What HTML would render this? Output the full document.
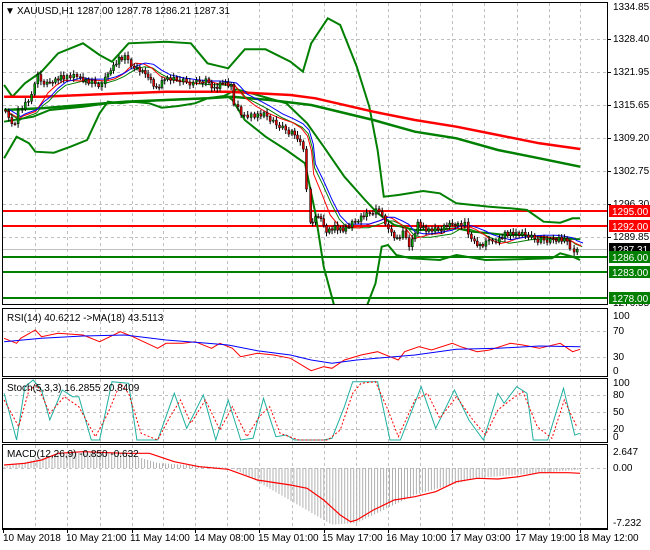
<!DOCTYPE html>
<html><head><meta charset="utf-8"><style>
html,body{margin:0;padding:0;background:#fff;width:650px;height:550px;overflow:hidden}
svg{display:block;font-family:"Liberation Sans",sans-serif}
</style></head><body>
<svg id="s" width="650" height="550" xmlns="http://www.w3.org/2000/svg">
<rect width="650" height="550" fill="#fff"/>
<g id="grid" stroke="#c0c0c0" stroke-dasharray="3,3" stroke-width="1"></g>
<g id="lines" fill="none"></g>
<g id="frames" fill="none" stroke="#000" stroke-width="1">
<rect x="2.5" y="2.5" width="605" height="302"/>
<rect x="2.5" y="308.5" width="605" height="68"/>
<rect x="2.5" y="378.5" width="605" height="64"/>
<rect x="2.5" y="444.5" width="605" height="84"/>
<line x1="2" y1="529.5" x2="608" y2="529.5"/>
</g>
<g font-size="10" fill="#000">
<text x="5" y="14">▼</text><text x="17" y="14">XAUUSD,H1  1287.00 1287.78 1286.21 1287.31</text>
<text x="7" y="321">RSI(14) 40.6212  -&gt;MA(18) 43.5113</text>
<text x="7" y="391">Stoch(5,3,3) 16.2855 20.8409</text>
<text x="7" y="457">MACD(12,26,9) -0.850 -0.632</text>
</g>
<g id="axis" font-size="10" fill="#000"></g>
</svg>
<script>
var S="http://www.w3.org/2000/svg";
function el(p,t,a){var e=document.createElementNS(S,t);for(var k in a)e.setAttribute(k,a[k]);p.appendChild(e);return e;}
var G=document.getElementById('grid'),L=document.getElementById('lines'),A=document.getElementById('axis');
var vx=[35,67,100,132,163,195,227,259,292,324,356,388,420,452,484,517,549,580];
[[3,304],[309,376],[379,442],[445,528]].forEach(function(r){vx.forEach(function(x){el(G,'line',{x1:x+.5,y1:r[0],x2:x+.5,y2:r[1]});});});
[39,72,105,138,171,204,237].forEach(function(y){el(G,'line',{x1:3,y1:y+.5,x2:607,y2:y+.5});});
[331,357,395,412,429,468].forEach(function(y){el(G,'line',{x1:3,y1:y+.5,x2:607,y2:y+.5});});
el(G,'line',{x1:3,y1:249.5,x2:607,y2:249.5,stroke:'#c0c0c0','stroke-dasharray':'none'});
function pts(a,oy){var s='';for(var i=0;i<a.length;i+=2)s+=(a[i]/2.41).toFixed(1)+','+(a[i+1]/3+oy).toFixed(1)+' ';return s;}
function pl(a,oy,c,w,da){var o={points:pts(a,oy),stroke:c,'stroke-width':w};if(da)o['stroke-dasharray']=da;el(L,'polyline',o);}
// horizontal levels
[[211,'#f00'],[226,'#f00'],[257,'#007f00'],[272,'#007f00'],[298,'#007f00']].forEach(function(h){el(L,'line',{x1:3,y1:h[0],x2:608,y2:h[0],stroke:h[1],'stroke-width':2});});
// BB & MAs
pl([10,255,30,290,60,250,100,215,140,160,200,130,240,165,270,185,310,130,400,125,460,130,500,190,550,205,590,148,640,148,700,185,730,215,750,130,790,55,820,75,860,200,890,320,910,450,925,590,960,585,1020,573,1060,580,1100,610,1140,615,1180,620,1230,625,1270,630,1310,665,1350,668,1380,655,1398,655],0,'#007f00',2);
pl([10,475,40,410,70,430,85,455,130,458,170,440,210,420,240,340,260,305,290,310,320,305,360,310,390,323,430,318,470,310,500,295,550,290,560,300,590,360,640,410,690,450,735,490,760,640,780,800,805,915],0,'#007f00',2);
pl([885,915,905,850,920,740,935,735,955,765,990,775,1060,780,1100,765,1170,780,1250,778,1330,775,1350,760,1380,770,1398,780],0,'#007f00',2);
pl([10,365,80,350,120,330,200,320,260,310,320,305,400,300,500,295,540,288,570,268,620,285,690,310,740,370,780,440,830,530,880,600,910,640,950,675,1000,690,1050,690,1100,685,1140,695,1180,700,1220,705,1260,705,1300,710,1350,715,1398,718],0,'#007f00',2);
pl([10,290,100,290,200,285,300,280,400,275,550,275,700,285,760,295,900,335,1000,360,1100,380,1200,405,1300,430,1398,447],0,'#f00',2.5);
pl([10,330,100,325,200,315,300,305,400,300,500,295,560,290,650,300,750,315,900,360,1000,395,1100,415,1200,450,1300,475,1398,500],0,'#007f00',2.5);
var C=[10,330,40,375,50,330,80,290,95,220,110,260,130,240,150,230,190,230,210,245,250,255,270,205,290,175,305,170,320,195,340,215,360,225,380,265,400,235,430,240,470,250,500,240,520,265,540,245,560,260,570,310,585,345,610,345,640,345,670,375,700,395,720,410,735,440,745,560,750,670,770,650,790,690,810,680,830,690,860,665,880,650,910,630,925,640,940,690,960,720,975,700,990,740,1010,670,1030,690,1060,690,1080,680,1100,670,1125,670,1140,720,1160,740,1175,730,1200,720,1220,700,1240,700,1270,705,1300,720,1330,720,1350,715,1370,720,1380,750,1395,755];
// smoothed MAs
function sm(a,n,dx,dy){var r=[];for(var i=0;i<a.length;i+=2){var s=0,c=0;for(var j=Math.max(0,i-2*n);j<=i;j+=2){s+=a[j+1];c++;}r.push(a[i]+dx,s/c+dy);}return r;}
pl(sm(C,4,8,8),0,'#007f00',1);pl(sm(C,3,6,3),0,'#f00',1);pl(sm(C,4,10,-3),0,'#00f',1);
// candles
var cg=el(L,'g',{});var prev=C[1]/3;
for(var i=0;i<C.length-2;i+=2){var x0=C[i]/2.41,y0=C[i+1]/3,x1=C[i+2]/2.41,y1=C[i+3]/3;var n=Math.max(1,Math.round((x1-x0)/3.2));
for(var k=0;k<n;k++){var x=x0+(x1-x0)*k/n,o=prev,c=y0+(y1-y0)*(k+1)/n+((k*7+i)%5-2)*1.2;var t=Math.min(o,c),b=Math.max(o,c);
el(cg,'line',{x1:x+1.5,y1:t-2-((i+k)%3),x2:x+1.5,y2:b+2+((i+k*2)%3),stroke:'#000','stroke-width':1});
el(cg,'rect',{x:x+.5,y:t,width:2,height:Math.max(1,b-t),fill:c<o?'#00a000':'#e00000',stroke:'#000','stroke-width':.5});prev=c;}}
// RSI
pl([10,115,40,130,50,115,85,90,100,110,140,100,200,105,240,125,290,95,320,110,380,145,400,130,440,130,470,125,510,145,530,130,560,145,580,170,620,160,660,165,700,175,740,205,750,212,780,200,800,205,830,180,870,165,910,155,940,170,960,180,975,155,1010,140,1040,150,1090,130,1110,140,1150,155,1180,150,1230,130,1260,135,1300,145,1350,130,1380,155,1398,148],300,'#f00',1);
pl([10,125,100,115,200,108,300,105,400,120,500,130,550,135,620,152,700,165,750,180,800,190,860,180,950,170,1000,165,1100,148,1200,145,1300,138,1398,140],300,'#00f',1);
// Stoch
pl([10,280,40,420,60,260,80,240,100,270,120,360,150,270,175,290,190,290,220,420,240,420,270,245,310,250,330,420,380,420,420,280,450,385,490,285,520,420,550,300,580,420,610,415,635,295,665,410,690,405,710,420,780,420,800,415,830,320,850,245,910,245,940,420,965,420,1015,260,1050,385,1095,270,1130,360,1165,420,1200,280,1215,310,1245,260,1270,280,1285,420,1320,420,1358,265,1385,405,1398,400],300,'#20b0a0',1);
pl([10,300,45,380,70,270,90,255,120,340,155,290,190,320,230,410,260,340,290,250,310,280,340,400,380,420,410,350,435,300,460,370,495,300,530,390,560,320,595,410,625,350,650,320,675,400,720,420,790,420,820,390,850,280,870,250,905,245,935,330,960,410,1000,300,1030,280,1060,355,1100,290,1140,360,1170,405,1200,330,1230,300,1260,275,1295,380,1330,415,1360,300,1390,380],300,'#f00',1,'2,2');
// MACD hist
function hv(x){var P=[0,0,150,-45,300,-45,380,-15,560,0,620,40,800,170,860,165,1000,80,1150,30,1300,15,1398,5];for(var i=0;i<P.length-2;i+=2){if(x<=P[i+2]){var t=(x-P[i])/(P[i+2]-P[i]);return P[i+1]+(P[i+3]-P[i+1])*t;}}return 0;}
for(var x=10;x<=1398;x+=7.2){var h=hv(x)/3;el(L,'line',{x1:(x/2.41).toFixed(1),y1:468,x2:(x/2.41).toFixed(1),y2:468+h,stroke:'#b0b0b0','stroke-width':1});}
pl([10,495,60,490,100,480,140,460,200,455,300,460,360,460,420,485,480,500,550,508,620,540,700,555,740,565,780,600,820,645,845,665,860,660,900,630,950,600,1000,590,1050,575,1100,545,1150,535,1200,537,1250,530,1300,518,1370,518,1398,520],300,'#f00',1.2);
// axis labels
[[10,'1334.85'],[42,'1328.40'],[75,'1321.95'],[108,'1315.65'],[141,'1309.20'],[174,'1302.75'],[207,'1296.30'],[240,'1289.85'],[306,'1276.55'],[319,'100'],[334,'70'],[360,'30'],[374,'0'],[386,'100'],[398,'80'],[415,'50'],[432,'20'],[440,'0'],[455,'2.647'],[471,'0.00'],[526,'-7.232']].forEach(function(a){el(A,'text',{x:613,y:a[0]}).textContent=a[1];});
[[211,'#f00','1295.00','#fff'],[226,'#f00','1292.00','#fff'],[249,'#000','1287.31','#fff'],[257,'#007f00','1286.00','#fff'],[272,'#007f00','1283.00','#fff'],[298,'#007f00','1278.00','#fff']].forEach(function(b){el(A,'rect',{x:609,y:b[0]-6,width:41,height:12,fill:b[1]});el(A,'text',{x:612,y:b[0]+4,fill:b[3]}).textContent=b[2];});
[[66,'10 May 21:00'],[130,'11 May 14:00'],[194,'14 May 08:00'],[258,'15 May 01:00'],[322,'15 May 17:00'],[386,'16 May 10:00'],[450,'17 May 03:00'],[515,'17 May 19:00'],[578,'18 May 12:00']].forEach(function(t){el(A,'text',{x:t[0],y:541}).textContent=t[1];});
el(A,'text',{x:3,y:541}).textContent='10 May 2018';
[3,67,132,195,259,324,388,452,517,580].forEach(function(x){el(A,'line',{x1:x+.5,y1:529,x2:x+.5,y2:533,stroke:'#000'});});
[39,72,105,138,171,204,237].forEach(function(y){el(A,'line',{x1:608,y1:y+.5,x2:611,y2:y+.5,stroke:'#000'});});
</script>
</body></html>
